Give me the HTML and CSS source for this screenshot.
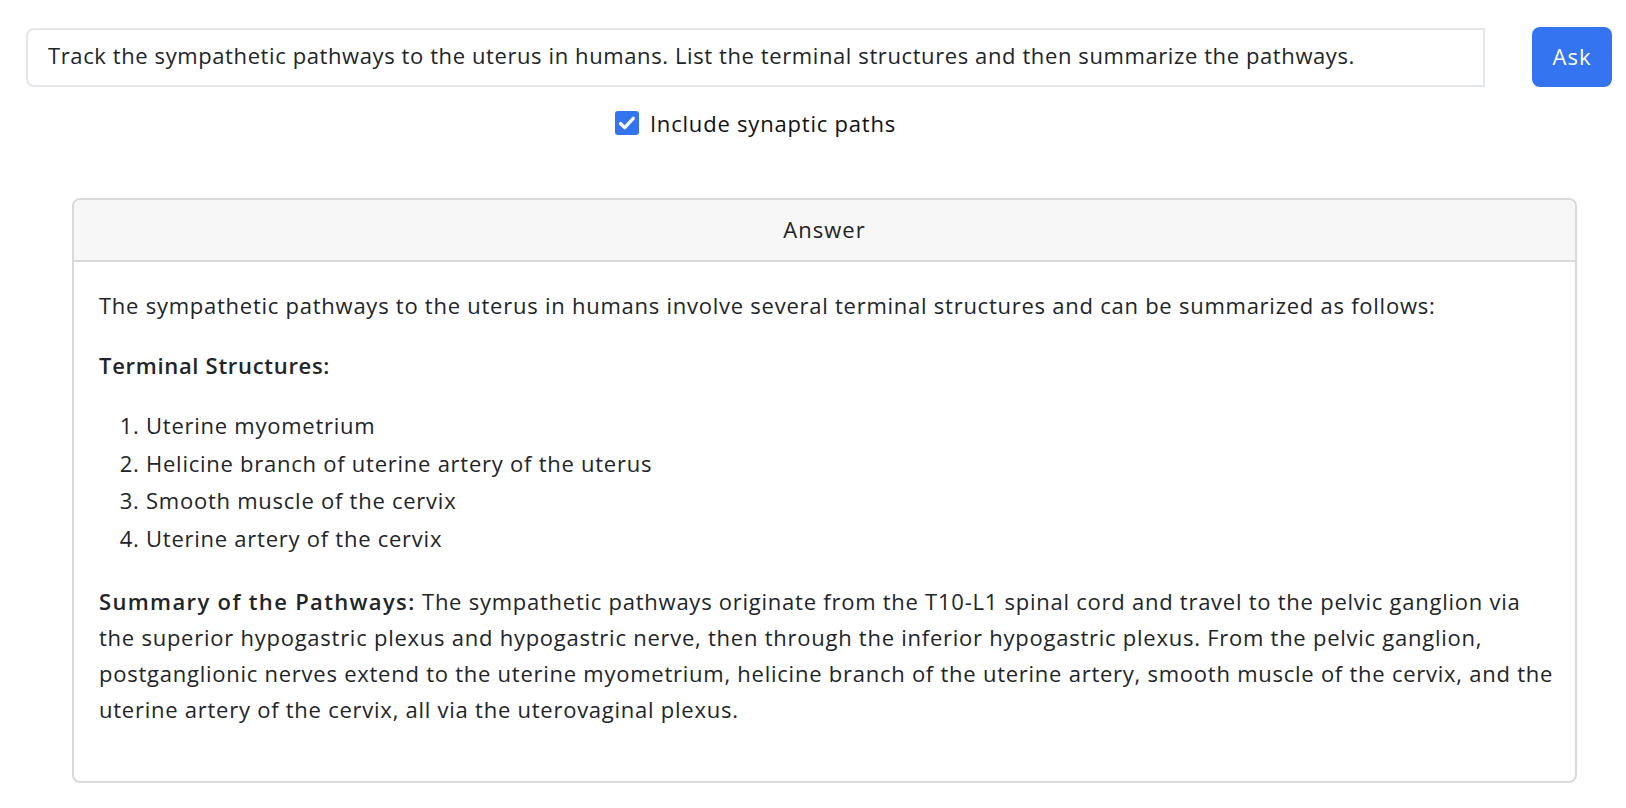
FILE: index.html
```html
<!DOCTYPE html>
<html lang="en">
<head>
<meta charset="utf-8">
<title>Ask</title>
<link rel="stylesheet" href="styles.css">
</head>
<body>
<div class="top">
  <div class="query-col">
    <input class="query" type="text" value="Track the sympathetic pathways to the uterus in humans. List the terminal structures and then summarize the pathways.">
    <label class="option">
      <span class="check"><svg viewBox="0 0 24 24" width="24" height="24"><rect x="0" y="0" width="24" height="24" rx="3" fill="#3574f0"/><path d="M5.5 12.5l4.2 4.2 8.6-9.4" fill="none" stroke="#fff" stroke-width="3.2" stroke-linecap="round" stroke-linejoin="round"/></svg></span>
      <span class="option-text">Include synaptic paths</span>
    </label>
  </div>
  <button class="ask">Ask</button>
</div>
<section class="card">
  <header class="card-head">Answer</header>
  <div class="card-body">
    <p>The sympathetic pathways to the uterus in humans involve several terminal structures and can be summarized as follows:</p>
    <p><strong>Terminal Structures:</strong></p>
    <ol>
      <li>Uterine myometrium</li>
      <li>Helicine branch of uterine artery of the uterus</li>
      <li>Smooth muscle of the cervix</li>
      <li>Uterine artery of the cervix</li>
    </ol>
    <p><strong class="run-in">Summary of the Pathways:</strong> The sympathetic pathways originate from the T10-L1 spinal cord and travel to the pelvic ganglion via the superior hypogastric plexus and hypogastric nerve, then through the inferior hypogastric plexus. From the pelvic ganglion, postganglionic nerves extend to the uterine myometrium, helicine branch of the uterine artery, smooth muscle of the cervix, and the uterine artery of the cervix, all via the uterovaginal plexus.</p>
  </div>
</section>
</body>
</html>
```
FILE: styles.css
```css
* { box-sizing: border-box; }
html, body { margin: 0; background: #fff; }
body {
  font-family: "Open Sans", "Noto Sans", sans-serif;
  color: #212529;
  letter-spacing: 0.75px;
}
.top {
  display: flex;
  align-items: flex-start;
  padding: 27px 14px 0 26px;
  gap: 47px;
}
.query-col {
  flex: 1;
  display: flex;
  flex-direction: column;
  align-items: center;
}
.query {
  width: 100%;
  height: 59px;
  margin-top: 1px;
  border: 2px solid #e3e6ea;
  border-radius: 8px 0 0 8px;
  padding: 0 20px 5px;
  font-family: inherit;
  font-size: 22px;
  letter-spacing: 0.6px;
  color: #212529;
  outline: none;
}
.option {
  display: flex;
  align-items: center;
  gap: 11px;
  margin-top: 21px;
  font-size: 22px;
  letter-spacing: 0.8px;
  color: #111;
}
.check { display: flex; width: 24px; height: 24px; }
.ask {
  width: 80px;
  height: 60px;
  border: 0;
  border-radius: 8px;
  background: #3574f0;
  color: #fff;
  font-family: inherit;
  font-size: 22px;
  letter-spacing: 1px;
  padding-bottom: 4px;
}
.card {
  margin: 60px 49px 26px 72px;
  border: 2px solid #dadada;
  border-radius: 8px;
  overflow: hidden;
}
.card-head {
  height: 62px;
  display: flex;
  align-items: center;
  justify-content: center;
  background: #f7f7f7;
  border-bottom: 2px solid #dadada;
  font-size: 22px;
  letter-spacing: 1px;
  color: #222;
  padding-bottom: 3px;
}
.card-body {
  padding: 25px 16px 54px 25px;
  font-size: 22px;
  line-height: 36px;
}
.card-body p { margin: 0 0 24px; }
.card-body p:last-child { margin-bottom: 0; }
.card-body strong { font-weight: 600; letter-spacing: 0.7px; }
.card-body strong.run-in { letter-spacing: 1.35px; }
.card-body ol {
  margin: 0 0 26px;
  padding-left: 47px;
}
.card-body li { line-height: 37.5px; }
```
